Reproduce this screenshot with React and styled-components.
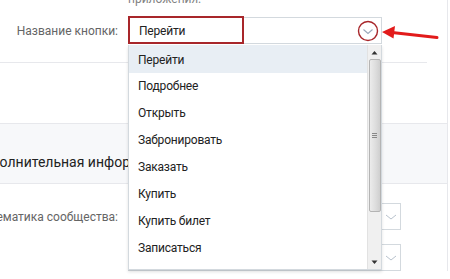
import React from "react";
import styled, { createGlobalStyle } from "styled-components";

const Global = createGlobalStyle`
  html, body { margin: 0; padding: 0; background: #fff; }
  body { font-family: Roboto, "Open Sans", Arial, sans-serif; }
`;

const Page = styled.div`
  position: relative;
  width: 450px;
  height: 279px;
  overflow: hidden;
  background: #fff;
`;

const Shift = styled.div`
  margin-left: -27px;
  width: 474px;
  border-right: 1px solid #e7e8ec;
`;

const Row = styled.div`
  display: grid;
  grid-template-columns: 145px 1fr;
  column-gap: 10px;
  align-items: center;
  margin-top: ${(p) => p.$mt || 0}px;
`;

const Label = styled.div`
  text-align: right;
  font-size: 12px;
  color: #656565;
  white-space: nowrap;
`;

const Note = styled.div`
  font-size: 12px;
  color: #828282;
  margin-top: -9px;
  line-height: 16px;
  height: 16px;
`;

const SelectWrap = styled.div`
  position: relative;
  width: ${(p) => p.$w}px;
`;

const SelectBox = styled.div`
  box-sizing: border-box;
  height: 27px;
  border: 1px solid #d3d9de;
  background: #fff;
  display: flex;
  align-items: center;
  padding: 0 0 0 10px;
  font-size: 12px;
  letter-spacing: -0.2px;
  color: #222;
`;

const Highlight = styled.div`
  position: absolute;
  left: 0;
  top: -1px;
  width: 116px;
  height: 28px;
  box-sizing: border-box;
  border: 2px solid #a8262a;
`;

const ChevronMark = styled.svg`
  position: absolute;
  right: 1px;
  top: 1px;
`;

const Divider = styled.div`
  height: 1px;
  background: #e7e8ec;
  margin-top: ${(p) => p.$mt}px;
  margin-right: 20px;
`;

const Band = styled.div`
  margin-top: ${(p) => p.$mt}px;
  height: 61px;
  box-sizing: border-box;
  background: #f7f8fa;
  border-top: 1px solid #e7e8ec;
  border-bottom: 1px solid #e7e8ec;
  padding: 28px 0 0 0;
  font-size: 14px;
  color: #222;
  line-height: 20px;
  white-space: nowrap;
`;

const SmallSelect = styled.div`
  box-sizing: border-box;
  width: 273px;
  height: 27px;
  border: 1px solid #d3d9de;
  position: relative;
`;

const Dropdown = styled.div`
  position: absolute;
  left: 128px;
  top: 45px;
  width: 254px;
  height: 225px;
  box-sizing: border-box;
  border: 1px solid #d3d9de;
  border-top: none;
  background: #fff;
  box-shadow: 0 2px 3px rgba(0, 0, 0, 0.12);
  display: flex;
`;

const List = styled.ul`
  list-style: none;
  margin: 0;
  padding: 0;
  flex: 1;
`;

const Item = styled.li`
  height: 27px;
  line-height: 27px;
  padding-left: 9px;
  font-size: 12px;
  letter-spacing: -0.2px;
  color: #222;
  background: ${(p) => (p.$active ? "#e8eef4" : "transparent")};
  ${(p) => p.$first && "height: 28px; line-height: 30px;"}
`;

const Scrollbar = styled.div`
  width: 13px;
  background: #f0f0f0;
  border-left: 1px solid #e2e2e2;
  display: flex;
  flex-direction: column;
  align-items: center;
`;

const ScrollBtn = styled.div`
  height: 14px;
  width: 100%;
  display: flex;
  align-items: center;
  justify-content: center;
`;

const Thumb = styled.div`
  box-sizing: border-box;
  width: 12px;
  height: 153px;
  border: 1px solid #b4b4b4;
  border-radius: 2px;
  background: linear-gradient(to right, #ececec, #dcdcdc 60%, #cfcfcf);
  display: flex;
  align-items: center;
  justify-content: center;
`;

const Grip = styled.div`
  width: 5px;
  height: 5px;
  background: repeating-linear-gradient(
    to bottom,
    #888 0 1px,
    transparent 1px 2px
  );
`;

const Spacer = styled.div`
  flex: 1;
`;

const Arrow = styled.svg`
  position: absolute;
  left: 380px;
  top: 24px;
`;

const Tiny = styled.svg`
  position: absolute;
  right: 3px;
  top: 8px;
`;

const items = [
  "Перейти",
  "Подробнее",
  "Открыть",
  "Забронировать",
  "Заказать",
  "Купить",
  "Купить билет",
  "Записаться",
];

export default function App() {
  return (
    <Page>
      <Global />
      <Shift>
        <Row>
          <div />
          <Note>приложения.</Note>
        </Row>
        <Row $mt={10}>
          <Label>Название кнопки:</Label>
          <SelectWrap $w={254}>
            <SelectBox>Перейти</SelectBox>
            <Highlight />
            <ChevronMark width="24" height="24" viewBox="0 0 24 24">
              <circle cx="11" cy="13" r="9.5" fill="none" stroke="#a8262a" strokeWidth="1.4" />
              <path d="M6.5 11.5 L11 15.5 L15.5 11.5" fill="none" stroke="#9aa9bb" strokeWidth="1.1" />
            </ChevronMark>
          </SelectWrap>
        </Row>
        <Divider $mt={18} />
        <Band $mt={60}>Дополнительная информация</Band>
        <Row $mt={19}>
          <Label>Тематика сообщества:</Label>
          <SmallSelect>
            <Tiny width="12" height="10" viewBox="0 0 12 10">
              <path d="M1 3 L6 7 L11 3" fill="none" stroke="#b8c2cd" strokeWidth="1" />
            </Tiny>
          </SmallSelect>
        </Row>
        <Row $mt={14}>
          <div />
          <SmallSelect>
            <Tiny width="12" height="10" viewBox="0 0 12 10">
              <path d="M1 3 L6 7 L11 3" fill="none" stroke="#b8c2cd" strokeWidth="1" />
            </Tiny>
          </SmallSelect>
        </Row>
      </Shift>

      <Dropdown>
        <List>
          {items.map((t, i) => (
            <Item key={t} $active={i === 0} $first={i === 0}>
              {t}
            </Item>
          ))}
        </List>
        <Scrollbar>
          <ScrollBtn>
            <svg width="7" height="5" viewBox="0 0 7 5">
              <path d="M0.5 4.5 L3.5 1 L6.5 4.5 Z" fill="#333" />
            </svg>
          </ScrollBtn>
          <Thumb>
            <Grip />
          </Thumb>
          <Spacer />
          <ScrollBtn>
            <svg width="7" height="5" viewBox="0 0 7 5">
              <path d="M0.5 0.5 L3.5 4 L6.5 0.5 Z" fill="#333" />
            </svg>
          </ScrollBtn>
        </Scrollbar>
      </Dropdown>

      <Arrow width="64" height="20" viewBox="0 0 64 20">
        <path d="M57 13.5 L12 8.5" stroke="#e21b1b" strokeWidth="3" strokeLinecap="round" fill="none" />
        <path d="M2 8 L15 2 L13.5 14.5 Z" fill="#e21b1b" />
      </Arrow>
    </Page>
  );
}
